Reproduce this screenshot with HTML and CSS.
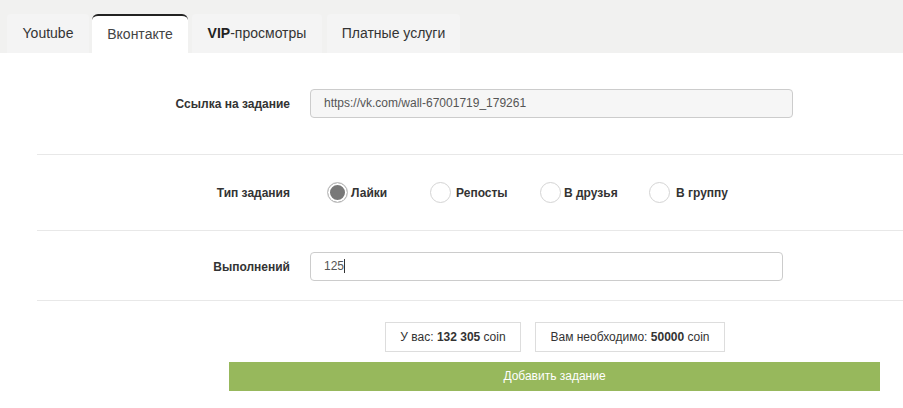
FILE: index.html
```html
<!DOCTYPE html>
<html lang="ru">
<head>
<meta charset="utf-8">
<link rel="stylesheet" href="styles.css">
</head>
<body>
<div class="top">
  <ul class="tabs">
    <li class="tab t1">Youtube</li>
    <li class="tab t2 active">Вконтакте</li>
    <li class="tab t3"><b>VIP</b>-просмотры</li>
    <li class="tab t4">Платные услуги</li>
  </ul>
</div>
<div class="panel">
  <div class="row row-link">
    <label class="lbl">Ссылка на задание</label>
    <div class="field readonly w1">https://vk.com/wall-67001719_179261</div>
  </div>
  <div class="row row-type">
    <label class="lbl">Тип задания</label>
    <div class="radios">
      <span class="radio r1"><span class="dot checked"></span>Лайки</span>
      <span class="radio r2"><span class="dot"></span>Репосты</span>
      <span class="radio r3"><span class="dot"></span>В друзья</span>
      <span class="radio r4"><span class="dot"></span>В группу</span>
    </div>
  </div>
  <div class="row row-count">
    <label class="lbl">Выполнений</label>
    <div class="field w2">125<span class="caret"></span></div>
  </div>
  <div class="bottom">
    <div class="info">
      <div class="box b1">У вас: <b>132 305</b> coin</div>
      <div class="box b2">Вам необходимо: <b>50000</b> coin</div>
    </div>
    <div class="btn">Добавить задание</div>
  </div>
</div>
</body>
</html>
```
FILE: styles.css
```css
* { box-sizing: border-box; }
html, body { margin: 0; padding: 0; }
body {
  font-family: "Liberation Sans", Arial, sans-serif;
  color: #333;
  background: #fff;
  width: 903px;
  height: 408px;
  overflow: hidden;
}
.top {
  background: #f1f1f0;
  height: 53px;
  padding: 14px 0 0 7px;
}
.tabs {
  list-style: none;
  margin: 0;
  padding: 0;
  display: flex;
  height: 39px;
}
.tab {
  height: 39px;
  background: #f4f4f4;
  border-radius: 4px 4px 0 0;
  font-size: 14px;
  line-height: 39px;
  color: #333;
  text-align: center;
}
.tab b { color: #222; }
.t1 { width: 82px; margin-right: 3px; }
.t2 { width: 96px; margin-right: 4px; }
.t3 { width: 130px; margin-right: 5px; }
.t4 { width: 133px; }
.tab.active {
  background: #fff;
  border-top: 2px solid #222;
  border-radius: 6px 6px 0 0;
  line-height: 37px;
  color: #444;
}
.panel { background: #fff; }
.row {
  margin-left: 37px;
  display: flex;
  align-items: center;
  border-bottom: 1px solid #e8e8e8;
}
.lbl {
  width: 253px;
  margin-right: 20px;
  text-align: right;
  font-weight: bold;
  font-size: 12px;
  color: #333;
}
.row-link { padding: 36px 0 36px; }
.row-type { padding: 27px 0 27px; }
.row-count { padding: 21px 0 19px; }
.field {
  height: 29px;
  border: 1px solid #ccc;
  border-radius: 4px;
  font-size: 12px;
  line-height: 27px;
  padding: 0 13px;
  color: #555;
  background: #fff;
}
.field.readonly { background: #f6f6f6; }
.w1 { width: 483px; }
.w2 { width: 473px; }
.caret {
  display: inline-block;
  width: 1px;
  height: 14px;
  background: #333;
  vertical-align: -3px;
}
.radios { display: flex; align-items: center; margin-left: 17px; }
.radio {
  display: flex;
  align-items: center;
  font-size: 12px;
  font-weight: bold;
  color: #333;
}
.dot {
  width: 21px;
  height: 21px;
  border-radius: 50%;
  border: 1px solid #d4d4d4;
  background: #fff;
  margin-right: 3px;
}
.dot.checked {
  background: #787878;
  box-shadow: inset 0 0 0 2px #fff;
  border-color: #c8c8c8;
}
.r1 { width: 103px; }
.r2 { width: 110px; }
.r3 { width: 109px; }
.r2 .dot { margin-right: 5px; }
.r4 .dot { margin-right: 6px; }
.bottom {
  margin-left: 229px;
  width: 651px;
  padding-top: 21px;
}
.info {
  display: flex;
  justify-content: center;
  gap: 14px;
  margin-left: 1px;
}
.box {
  height: 30px;
  border: 1px solid #ddd;
  font-size: 12px;
  line-height: 28px;
  color: #333;
  padding: 0 12px;
}
.b1 { width: 136px; text-align: center; }
.b2 { width: 190px; text-align: center; }
.btn {
  margin-top: 10px;
  height: 29px;
  background: #97b85c;
  color: #fff;
  font-size: 12px;
  line-height: 29px;
  text-align: center;
}
```
